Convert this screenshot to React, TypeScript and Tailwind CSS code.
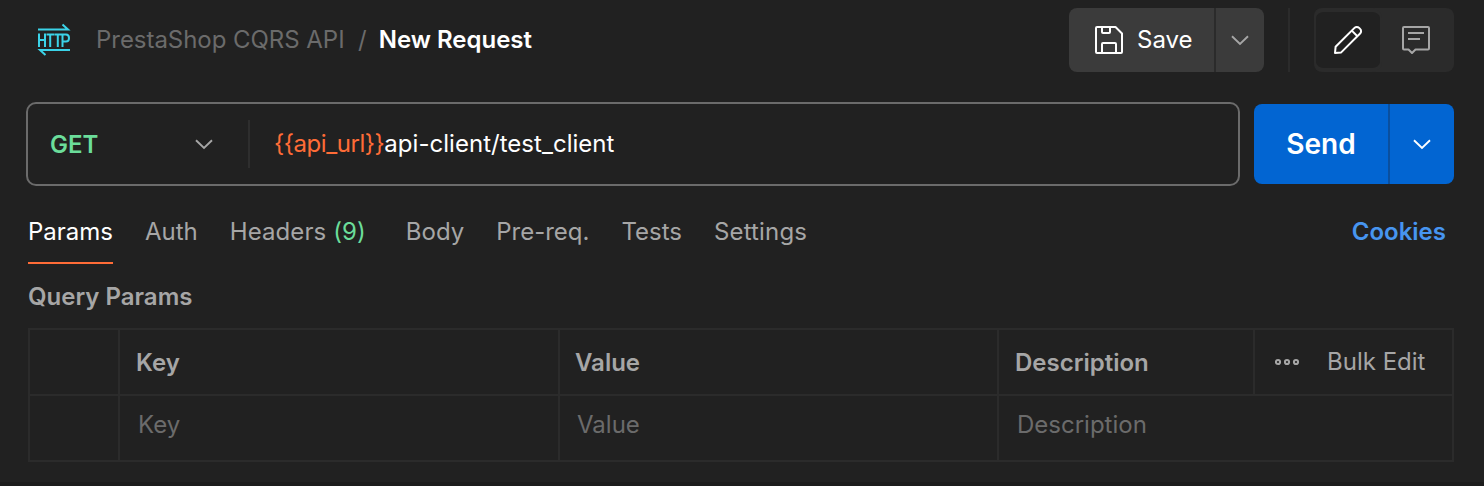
import type { ReactNode } from "react";

function Chevron({ className }: { className: string }) {
  return (
    <svg width="20" height="12" viewBox="0 0 20 12" fill="none" className={className}>
      <path d="M2 2.2 10 10l8-7.8" stroke="currentColor" strokeWidth="1.9" />
    </svg>
  );
}

function HttpIcon() {
  return (
    <svg width="34" height="34" viewBox="0 0 34 34" fill="none" stroke="#3bd3e8" strokeWidth="2">
      <path d="M1 6.500H31L25.500 1.500" />
      <path d="M33 27H3l5.500 5" />
      <path d="M2 10.500V24M8 10.500V24M2 17h6M9.500 11.500h7.500M13.200 11.500V24M17.300 11.500h7.200M20.800 11.500V24M25.500 24V11.500H29c4 0 4 7 0 7h-3.500" />
    </svg>
  );
}

function SaveIcon() {
  return (
    <svg width="28" height="28" viewBox="0 0 28 28" fill="none" stroke="#fff" strokeWidth="2" strokeLinejoin="round">
      <path d="M1 2a1 1 0 0 1 1-1h18.500l6.500 6.500V26a1 1 0 0 1-1 1H2a1 1 0 0 1-1-1z" />
      <path d="M7 1v5a1 1 0 0 0 1 1h6a1 1 0 0 0 1-1V1" />
      <path d="M7 27v-9a1 1 0 0 1 1-1h12a1 1 0 0 1 1 1v9" />
    </svg>
  );
}

function PencilIcon() {
  return (
    <svg width="30" height="30" viewBox="0 0 30 30" fill="none" stroke="#fff" strokeWidth="2" strokeLinejoin="round">
      <path d="M2 28l.6-6.200L21.500 2.900a3.200 3.200 0 0 1 4.600 0l1 1a3.200 3.200 0 0 1 0 4.600L8.200 27.400z" />
      <path d="M18.800 5.600l5.600 5.600" />
    </svg>
  );
}

function CommentIcon() {
  return (
    <svg width="28" height="28" viewBox="0 0 28 28" fill="none" stroke="#a6a6a6" strokeWidth="2" strokeLinejoin="round">
      <path d="M2 1h24a1 1 0 0 1 1 1v20.500a1 1 0 0 1-1 1H13.500L10 27l-3.500-3.500H2a1 1 0 0 1-1-1V2a1 1 0 0 1 1-1z" />
      <path d="M6 7h16M6 13h12" />
    </svg>
  );
}

function Tab({ children, active = false, className = "" }: { children: ReactNode; active?: boolean; className?: string }) {
  return (
    <div
      className={`h-[54px] border-b-2 pt-[2px] whitespace-pre ${active ? "border-[#ff6c37] text-white" : "border-transparent text-[#a6a6a6]"} ${className}`}
    >
      {children}
    </div>
  );
}

const line = "border-[#2b2b2b]";

export default function App() {
  return (
    <div className="flex h-[486px] w-[1484px] flex-col overflow-hidden border-b-4 border-[#1c1c1c] bg-[#212121] font-['Inter',sans-serif] text-[24px] leading-[40px]">
      <header className="flex h-[80px] items-center pr-[30px] pl-[37px]">
        <HttpIcon />
        <div className="ml-[25px] tracking-[-0.04px] text-[#6b6b6b]">PrestaShop CQRS API</div>
        <div className="ml-[13.5px] text-[#6b6b6b]">/</div>
        <div className="ml-[12px] font-semibold text-white">New Request</div>
        <div className="ml-auto flex h-[64px] overflow-hidden rounded-[8px] bg-[#3b3b3b]">
          <button className="flex w-[145px] items-center pl-[26px] text-white">
            <SaveIcon />
            <span className="ml-[14px]">Save</span>
          </button>
          <button className="flex w-[50px] items-center justify-center border-l-2 border-[#2b2b2b]">
            <Chevron className="text-[#a6a6a6]" />
          </button>
        </div>
        <div className="ml-[24px] h-[64px] w-[2px] bg-[#2b2b2b]" />
        <div className="ml-[24px] flex h-[64px] w-[140px] rounded-[8px] bg-[#2b2b2b]">
          <button className="flex w-[68px] items-center justify-center rounded-[10px] border-x-2 border-y-4 border-[#2b2b2b] bg-[#212121]">
            <PencilIcon />
          </button>
          <button className="flex flex-1 items-center justify-center pr-1">
            <CommentIcon />
          </button>
        </div>
      </header>

      <section className="mt-[22px] flex h-[84px] items-center gap-[14px] pr-[30px] pl-[26px]">
        <div className="flex h-full w-[1214px] items-center rounded-[10px] border-2 border-[#6b6b6b]">
          <div className="flex h-[48px] w-[222px] items-center border-r-2 border-[#2e2e2e] pr-[34px] pl-[22px]">
            <span className="pt-[2px] font-semibold text-[#6bdd9a]">GET</span>
            <Chevron className="ml-auto text-[#a6a6a6]" />
          </div>
          <div className="ml-[24px] text-white">
            <span className="tracking-[-0.45px] text-[#ff6c37]">{"{{api_url}}"}</span>
            <span className="tracking-[0.03px]">api-client/test_client</span>
          </div>
        </div>
        <div className="flex h-[80px] w-[200px] overflow-hidden rounded-[8px] bg-[#0265d2]">
          <button className="w-[134px] text-[28px] font-semibold text-white">Send</button>
          <button className="flex flex-1 items-center justify-center border-l-2 border-[#0a4f9e]">
            <Chevron className="text-white" />
          </button>
        </div>
      </section>

      <nav className="mt-[24px] flex pr-[38px] pl-[28px]">
        <Tab active>Params</Tab>
        <Tab className="ml-[32px]">Auth</Tab>
        <Tab className="ml-[32px] tracking-[0.08px]">
          Headers <span className="text-[#6bdd9a]">(9)</span>
        </Tab>
        <Tab className="ml-[40px]">Body</Tab>
        <Tab className="ml-[32px]">Pre-req.</Tab>
        <Tab className="ml-[32px]">Tests</Tab>
        <Tab className="ml-[32px] tracking-[0.15px]">Settings</Tab>
        <a className="ml-auto pt-[2px] font-semibold text-[#4795f0]">Cookies</a>
      </nav>

      <h2 className="mt-[13px] ml-[28px] font-semibold text-[#a6a6a6]">Query Params</h2>

      <div className={`mt-[11px] ml-[28px] w-[1426px] border-2 ${line}`}>
        <div className={`grid h-[66px] grid-cols-[90px_440px_439px_256px_1fr] border-b-2 font-semibold leading-[66px] text-[#a6a6a6] ${line}`}>
          <div className={`border-r-2 ${line}`} />
          <div className={`border-r-2 pl-[16px] ${line}`}>Key</div>
          <div className={`border-r-2 pl-[15px] ${line}`}>Value</div>
          <div className={`border-r-2 pl-[16px] ${line}`}>Description</div>
          <div className="flex h-[64px] items-center pl-[20px] font-normal">
            <svg width="25" height="8" viewBox="0 0 25 8" fill="none" stroke="#a6a6a6" strokeWidth="2">
              <circle cx="3" cy="4" r="2.100" />
              <circle cx="12" cy="4" r="2.100" />
              <circle cx="21" cy="4" r="2.100" />
            </svg>
            <span className="ml-[27px] leading-[64px]">Bulk Edit</span>
          </div>
        </div>
        <div className="grid h-[64px] grid-cols-[90px_440px_439px_1fr] leading-[57px] text-[#6b6b6b]">
          <div className={`border-r-2 ${line}`} />
          <div className={`border-r-2 pl-[18px] ${line}`}>Key</div>
          <div className={`border-r-2 pl-[17px] ${line}`}>Value</div>
          <div className="pl-[18px]">Description</div>
        </div>
      </div>
    </div>
  );
}
